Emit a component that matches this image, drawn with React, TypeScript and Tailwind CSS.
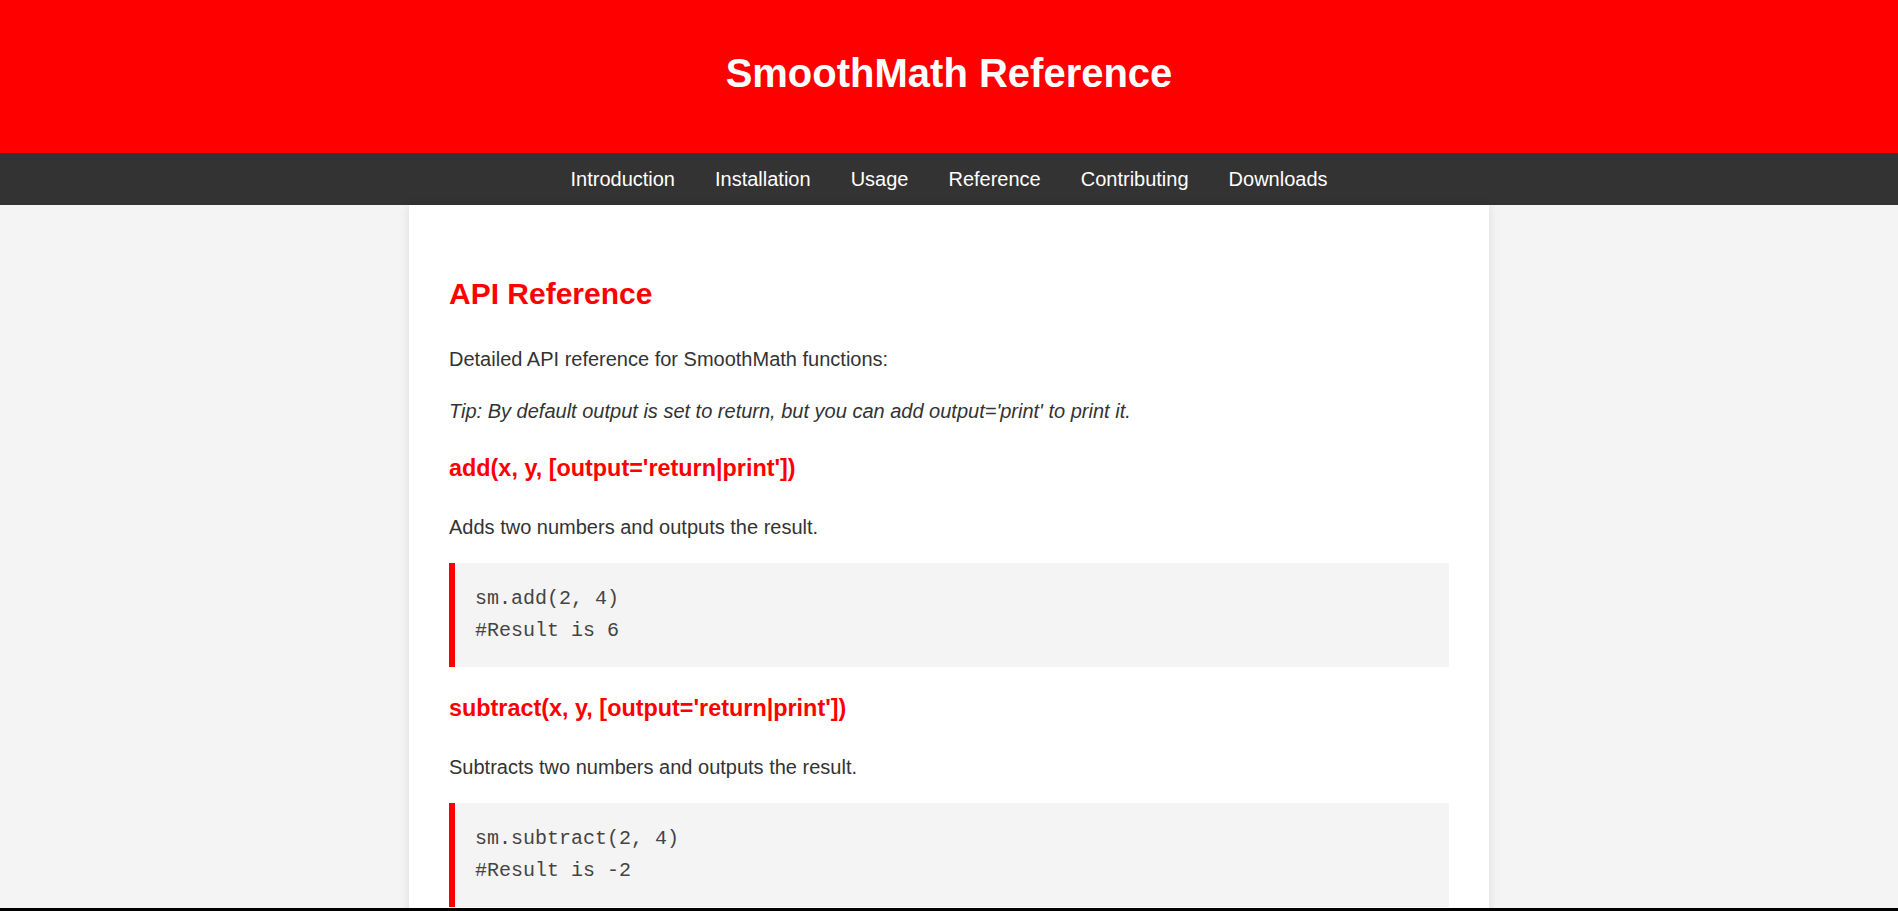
import React from "react";

const navItems = ["Introduction", "Installation", "Usage", "Reference", "Contributing", "Downloads"];

function Fn({ title, desc, code }: { title: string; desc: string; code: string[] }) {
  return (
    <>
      <h3 className="mt-[23.4px] mb-[23.4px] text-[23.4px] leading-[37.44px] font-bold text-[#ff0000]">{title}</h3>
      <p className="my-[20px] text-[20px] leading-[32px] text-[#333]">{desc}</p>
      <pre className="my-[20px] bg-[#f4f4f4] border-l-[6px] border-[#ff0000] py-[20px] pl-[20px] pr-[20px] text-[20px] leading-[32px] text-[#444] font-['Liberation_Mono','Courier_New',monospace]">
        {code.map((l, i) => (
          <div key={i}>{l}</div>
        ))}
      </pre>
    </>
  );
}

export default function App() {
  return (
    <div className="min-h-screen bg-[#f4f4f4] font-['Liberation_Sans',Arial,sans-serif]">
      <header className="bg-[#ff0000] pt-[50px] pb-[57px] text-center">
        <h1 className="text-[40px] leading-[46px] font-bold text-white">SmoothMath Reference</h1>
      </header>
      <nav className="bg-[#333] h-[52px]">
        <ul className="flex justify-center">
          {navItems.map((n) => (
            <li key={n} className="px-[20px] text-[20px] leading-[52px] text-white">
              {n}
            </li>
          ))}
        </ul>
      </nav>
      <main className="w-[1080px] mx-auto bg-white px-[40px] pt-[40px] pb-[40px] shadow-[0_0_10px_rgba(0,0,0,0.1)]">
        <h2 className="mt-[24.9px] mb-[24.9px] text-[30px] leading-[48px] font-bold text-[#ff0000]">API Reference</h2>
        <p className="my-[20px] text-[20px] leading-[32px] text-[#333]">Detailed API reference for SmoothMath functions:</p>
        <p className="my-[20px] text-[20px] leading-[32px] text-[#333] italic">
          Tip: By default output is set to return, but you can add output='print' to print it.
        </p>
        <Fn
          title="add(x, y, [output='return|print'])"
          desc="Adds two numbers and outputs the result."
          code={["sm.add(2, 4)", "#Result is 6"]}
        />
        <Fn
          title="subtract(x, y, [output='return|print'])"
          desc="Subtracts two numbers and outputs the result."
          code={["sm.subtract(2, 4)", "#Result is -2"]}
        />
      </main>
      <div className="fixed bottom-0 left-0 right-0 h-[3px] bg-black" />
    </div>
  );
}
